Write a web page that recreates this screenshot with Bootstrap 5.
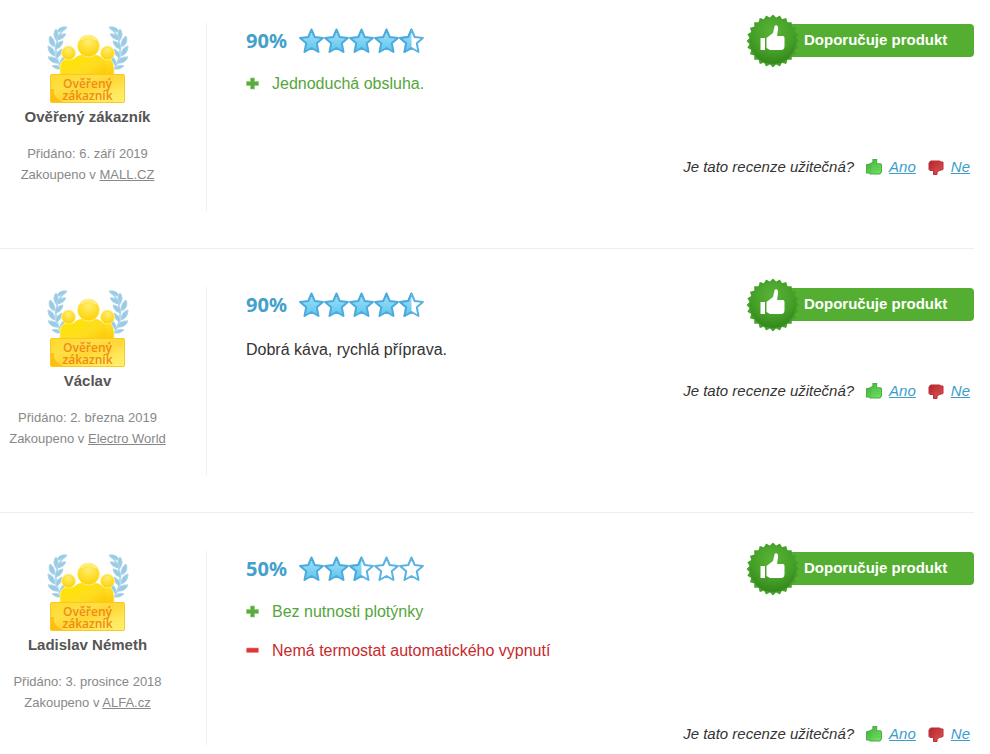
<!DOCTYPE html>
<html lang="cs">
<head>
<meta charset="utf-8">
<meta name="viewport" content="width=device-width, initial-scale=1">
<title>Recenze produktu</title>
<link href="https://cdn.jsdelivr.net/npm/bootstrap@5.3.0/dist/css/bootstrap.min.css" rel="stylesheet">
<style>
body{font-family:"Liberation Sans",Arial,sans-serif;color:#333;background:#fff;font-size:16px}
.reviews{padding-right:16px}
.review{padding:38px 0 37px;border-bottom:1px solid #eee}
.review:first-child{padding-top:23px}
.review:last-child{border-bottom:0;padding-bottom:0}
.author{width:207px;padding-right:31px;border-right:1px solid #eee;min-height:188px}
.verified-mark{width:85px}
.verified-label{left:0;right:0;bottom:3px;font-family:"Open Sans",sans-serif;font-size:12px;line-height:12px;font-weight:600;color:#ef8b16}
.author-name{font-size:15px;line-height:24px;color:#555;margin-bottom:14px}
.author-meta{font-size:13px;line-height:21px;color:#888}
.author-meta a{color:#888}
.opinion{padding-left:39px}
.rating{height:35px;margin-bottom:6px}
.percent{font-family:"Noto Sans","Open Sans",sans-serif;font-size:20px;font-weight:700;line-height:35px;color:#439fcb;width:53px}
.points{margin-bottom:35px}
.points li{line-height:39px}
.points svg{margin-right:13px}
.good{color:#55a53c}
.bad{color:#c72a2c}
.comment{line-height:24px;padding-top:10px;margin:0}
.recommend{width:201px;height:33px;padding-left:31px;border-radius:4px;background:#53ae31;color:#fff;font-size:15px;line-height:32px}
.seal{left:-27px;top:-10px}
.vote{font-size:15px;line-height:22px;padding:18px 4px 0 0}
.vote a{color:#3b9dcb}
.yes{margin:0 7px 0 12px}
.no{margin:0 7px 0 12px}
</style>
</head>
<body>
<svg class="position-absolute" width="0" height="0" aria-hidden="true">
<defs>
<linearGradient id="gold" x1="0" y1="0" x2="1" y2="1"><stop offset="0" stop-color="#ffe600"/><stop offset=".55" stop-color="#fedc20"/><stop offset="1" stop-color="#ffc400"/></linearGradient>
<linearGradient id="plate" x1="0" y1="0" x2="1" y2="1"><stop offset="0" stop-color="#ffd92c"/><stop offset=".35" stop-color="#ffdf45"/><stop offset=".5" stop-color="#ffd634"/><stop offset=".75" stop-color="#ffe75a"/><stop offset="1" stop-color="#fff06e"/></linearGradient>
<radialGradient id="shine" cx=".5" cy=".3" r=".7"><stop offset="0" stop-color="#ffee70"/><stop offset="1" stop-color="#ffd000"/></radialGradient>
<linearGradient id="sky" x1="0" y1="0" x2="0" y2="1"><stop offset="0" stop-color="#a3e3f8"/><stop offset="1" stop-color="#5cc5ee"/></linearGradient>
<radialGradient id="leafy" cx=".5" cy=".3" r=".7"><stop offset="0" stop-color="#59b338"/><stop offset=".6" stop-color="#46a128"/><stop offset="1" stop-color="#33871b"/></radialGradient>
<linearGradient id="lime" x1="0" y1="0" x2="1" y2="1"><stop offset="0" stop-color="#3fae38"/><stop offset="1" stop-color="#74e668"/></linearGradient>
<linearGradient id="ruby" x1="0" y1="0" x2="1" y2="1"><stop offset="0" stop-color="#e0555a"/><stop offset="1" stop-color="#b8252b"/></linearGradient>
</defs>
<symbol id="laurel" viewBox="0 0 22 46">
<path d="M19 2C8 9 5 28 15 43" fill="none" stroke="#b5dcee" stroke-width="2"/>
<g fill="#9bcbe4" stroke="#a9d4e9" stroke-width="1" stroke-linejoin="round">
<path d="M20 1q-8-1-10 5q7 0 10-5z"/><path d="M9 3q-4 5 0 11q4-6 0-11z"/><path d="M19 8q-8-1-10 6q7 0 10-6z"/>
<path d="M3 10q-3 7 4 11q2-7-4-11z"/><path d="M16 15q-8 1-8 8q7-1 8-8z"/>
<path d="M1 20q0 8 7 10q0-8-7-10z"/><path d="M15 23q-7 3-6 9q6-2 6-9z"/>
<path d="M1 31q3 7 11 6q-3-7-11-6z"/><path d="M17 30q-5 4-4 10q6-4 4-10z"/><path d="M5 40q4 4 10 3q-4-5-10-3z"/>
</g>
</symbol>
<symbol id="verified" viewBox="5 8 85 82">
<use href="#laurel" x="7" y="11" width="22" height="46"/>
<g transform="translate(96 0) scale(-1 1)"><use href="#laurel" x="7" y="11" width="22" height="46"/></g>
<g stroke="#fff3a0" stroke-width=".8">
<path d="M20 62v-10q0-7 7-8h43q4 3 4 11v7z" fill="url(#gold)"/>
<circle cx="28.500" cy="38" r="7" fill="url(#shine)"/><circle cx="67.500" cy="38" r="7" fill="url(#shine)"/>
<path d="M31 62q-1-13 3-18q3-4 8-4h13q5 0 8 4q4 5 3 18z" fill="url(#gold)" stroke="none"/>
<circle cx="48.500" cy="31" r="11" fill="url(#shine)"/>
</g>
<path d="M41 25q7-7 15 0" fill="none" stroke="#fff6a8" stroke-width="2" opacity=".6"/>
<rect x="10.500" y="59.500" width="74" height="28" rx="1" fill="url(#plate)" stroke="#f9c822"/>
<path d="M11 87v-13l3 0q-1 9 9 13z" fill="#ffb400" opacity=".7"/>
</symbol>
<symbol id="star-shape" viewBox="0 0 25 26"><path d="M12.500 1.500l3.200 7.500 8.200.9-6.100 5.400 1.700 8.700-7-4-7 4 1.700-8.700-6.100-5.400 8.200-.9z"/></symbol>
<symbol id="star-empty" viewBox="0 0 25 26"><use href="#star-shape" width="25" height="26" fill="#fff" stroke="#5ab3e2" stroke-width="2" stroke-linejoin="round"/></symbol>
<symbol id="star-full" viewBox="0 0 25 26"><use href="#star-shape" width="25" height="26" fill="url(#sky)" stroke="#4caadd" stroke-width="2" stroke-linejoin="round"/></symbol>
<symbol id="star-half" viewBox="0 0 25 26"><use href="#star-empty" width="25" height="26"/><svg width="12.500" height="26" viewBox="0 0 12.500 26"><use href="#star-full" width="25" height="26"/></svg></symbol>
<symbol id="seal" viewBox="-27 -27 54 54">
<g fill="#46a12a"><path id="tooth" d="M0-26.500L26.500 0 0 26.500-26.500 0z"/><use href="#tooth" transform="rotate(15)"/><use href="#tooth" transform="rotate(30)"/><use href="#tooth" transform="rotate(45)"/><use href="#tooth" transform="rotate(60)"/><use href="#tooth" transform="rotate(75)"/></g>
<circle r="23" fill="url(#leafy)"/>
<path d="M-12.500-3h4.500v12h-4.500zM-6.500-3L0-8l1.500-6.500q.5-1.500 2-1.200q2 .7 1.500 4.200L4-5h6q1.500 0 1.500 2V5q0 4-3.500 4H-3l-3.500-2z" fill="#fff"/>
</symbol>
<symbol id="plus" viewBox="0 0 13 13"><path d="M4.500 1h4v3.500H12.500v4h-4V12h-4V8.500H.5v-4h4z" fill="#57ad3d" stroke="#8ccc78" stroke-width=".6"/></symbol>
<symbol id="minus" viewBox="0 0 13 13"><rect x=".5" y="4" width="12" height="4.500" rx=".7" fill="#e03436" stroke="#ee8584" stroke-width=".6"/></symbol>
<symbol id="thumb" viewBox="0 0 15 15"><path d="M.5 5.500L4 4.500l2.500-1.500V.5h3.500v4h3.500l1 1v6.500l-1.500 2h-9l-1.500-1h-2z"/><path d="M4.200 6v6M9.500 7.500h4M9.500 10h4" fill="none" opacity=".4"/></symbol>
</svg>

<main class="reviews">
<article class="review d-flex">
<div class="author flex-shrink-0 text-center">
<div class="verified-mark position-relative mx-auto"><svg class="d-block" width="85" height="82" aria-hidden="true"><use href="#verified"/></svg><div class="verified-label position-absolute">Ověřený<br>zákazník</div></div>
<div class="author-name fw-bold">Ověřený zákazník</div>
<div class="author-meta">Přidáno: 6. září 2019<br>Zakoupeno v <a href="#">MALL.CZ</a></div>
</div>
<div class="opinion flex-grow-1">
<div class="rating d-flex align-items-center">
<div class="percent">90%</div>
<div class="d-flex"><svg width="25" height="26"><use href="#star-full"/></svg><svg width="25" height="26"><use href="#star-full"/></svg><svg width="25" height="26"><use href="#star-full"/></svg><svg width="25" height="26"><use href="#star-full"/></svg><svg width="25" height="26"><use href="#star-half"/></svg></div>
<div class="recommend position-relative ms-auto fw-bold"><svg class="seal position-absolute" width="54" height="54"><use href="#seal"/></svg>Doporučuje produkt</div>
</div>
<ul class="points list-unstyled">
<li class="good d-flex align-items-center"><svg width="13" height="13"><use href="#plus"/></svg>Jednoduchá obsluha.</li>
</ul>
<div class="vote d-flex justify-content-end align-items-center fst-italic">Je tato recenze užitečná?
<svg class="yes" width="16" height="16" fill="url(#lime)" stroke="#4cae43"><use href="#thumb"/></svg><a href="#">Ano</a>
<svg class="no" width="16" height="15" fill="url(#ruby)" stroke="#b43035"><use href="#thumb" width="16" height="15" transform="rotate(180 8 7.500)"/></svg><a href="#">Ne</a></div>
</div>
</article>

<article class="review d-flex">
<div class="author flex-shrink-0 text-center">
<div class="verified-mark position-relative mx-auto"><svg class="d-block" width="85" height="82" aria-hidden="true"><use href="#verified"/></svg><div class="verified-label position-absolute">Ověřený<br>zákazník</div></div>
<div class="author-name fw-bold">Václav</div>
<div class="author-meta">Přidáno: 2. března 2019<br>Zakoupeno v <a href="#">Electro World</a></div>
</div>
<div class="opinion flex-grow-1">
<div class="rating d-flex align-items-center">
<div class="percent">90%</div>
<div class="d-flex"><svg width="25" height="26"><use href="#star-full"/></svg><svg width="25" height="26"><use href="#star-full"/></svg><svg width="25" height="26"><use href="#star-full"/></svg><svg width="25" height="26"><use href="#star-full"/></svg><svg width="25" height="26"><use href="#star-half"/></svg></div>
<div class="recommend position-relative ms-auto fw-bold"><svg class="seal position-absolute" width="54" height="54"><use href="#seal"/></svg>Doporučuje produkt</div>
</div>
<p class="comment">Dobrá káva, rychlá příprava.</p>
<div class="vote d-flex justify-content-end align-items-center fst-italic">Je tato recenze užitečná?
<svg class="yes" width="16" height="16" fill="url(#lime)" stroke="#4cae43"><use href="#thumb"/></svg><a href="#">Ano</a>
<svg class="no" width="16" height="15" fill="url(#ruby)" stroke="#b43035"><use href="#thumb" width="16" height="15" transform="rotate(180 8 7.500)"/></svg><a href="#">Ne</a></div>
</div>
</article>

<article class="review d-flex">
<div class="author flex-shrink-0 text-center">
<div class="verified-mark position-relative mx-auto"><svg class="d-block" width="85" height="82" aria-hidden="true"><use href="#verified"/></svg><div class="verified-label position-absolute">Ověřený<br>zákazník</div></div>
<div class="author-name fw-bold">Ladislav Németh</div>
<div class="author-meta">Přidáno: 3. prosince 2018<br>Zakoupeno v <a href="#">ALFA.cz</a></div>
</div>
<div class="opinion flex-grow-1">
<div class="rating d-flex align-items-center">
<div class="percent">50%</div>
<div class="d-flex"><svg width="25" height="26"><use href="#star-full"/></svg><svg width="25" height="26"><use href="#star-full"/></svg><svg width="25" height="26"><use href="#star-half"/></svg><svg width="25" height="26"><use href="#star-empty"/></svg><svg width="25" height="26"><use href="#star-empty"/></svg></div>
<div class="recommend position-relative ms-auto fw-bold"><svg class="seal position-absolute" width="54" height="54"><use href="#seal"/></svg>Doporučuje produkt</div>
</div>
<ul class="points list-unstyled">
<li class="good d-flex align-items-center"><svg width="13" height="13"><use href="#plus"/></svg>Bez nutnosti plotýnky</li>
<li class="bad d-flex align-items-center"><svg width="13" height="13"><use href="#minus"/></svg>Nemá termostat automatického vypnutí</li>
</ul>
<div class="vote d-flex justify-content-end align-items-center fst-italic">Je tato recenze užitečná?
<svg class="yes" width="16" height="16" fill="url(#lime)" stroke="#4cae43"><use href="#thumb"/></svg><a href="#">Ano</a>
<svg class="no" width="16" height="15" fill="url(#ruby)" stroke="#b43035"><use href="#thumb" width="16" height="15" transform="rotate(180 8 7.500)"/></svg><a href="#">Ne</a></div>
</div>
</article>
</main>
<script src="https://cdn.jsdelivr.net/npm/bootstrap@5.3.0/dist/js/bootstrap.bundle.min.js"></script>
</body>
</html>
